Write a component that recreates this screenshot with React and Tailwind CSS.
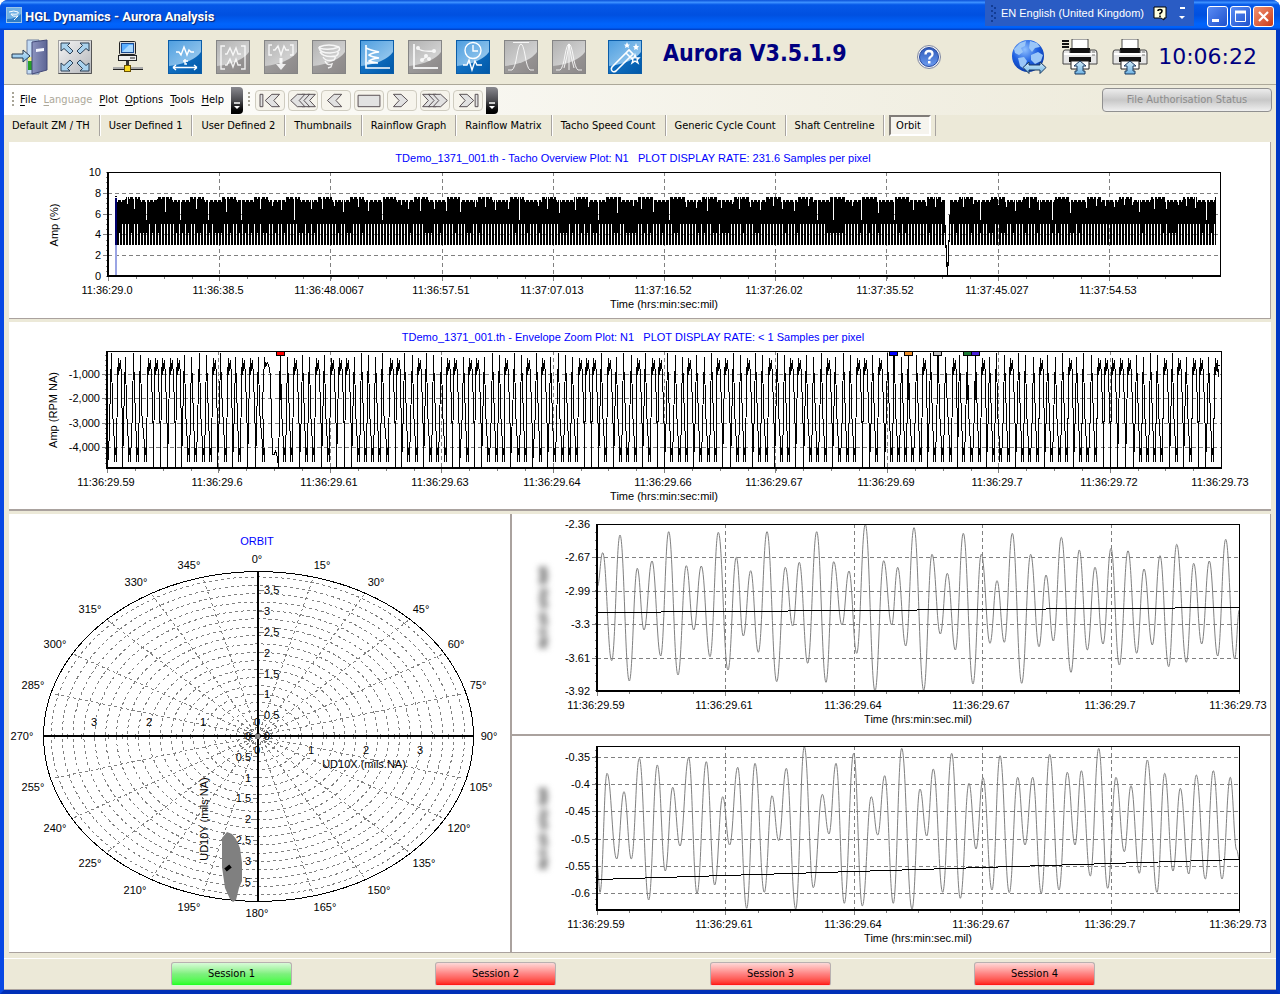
import React from "react";

const UI = "font-['DejaVu_Sans_Condensed','DejaVu_Sans',sans-serif]";

/* ---------- toolbar icons ---------- */

function SharedDefs() {
  return (
    <svg className="absolute h-0 w-0" aria-hidden="true">
      <defs>
        <linearGradient id="tileBlue" x1="0" y1="0" x2="1" y2="1">
          <stop offset="0" stopColor="#1f82d6" />
          <stop offset="1" stopColor="#0058a8" />
        </linearGradient>
        <linearGradient id="glossBlue" x1="0" y1="0" x2="1" y2="1">
          <stop offset="0" stopColor="#4f9fe0" />
          <stop offset="1" stopColor="#a5d0f0" />
        </linearGradient>
        <linearGradient id="tileGray" x1="0" y1="0" x2="1" y2="1">
          <stop offset="0" stopColor="#a9a9a9" />
          <stop offset="1" stopColor="#8b8787" />
        </linearGradient>
        <linearGradient id="glossGray" x1="0" y1="0" x2="1" y2="1">
          <stop offset="0" stopColor="#b2b2b2" />
          <stop offset="1" stopColor="#dedede" />
        </linearGradient>
        <linearGradient id="arrowBlue" x1="0" y1="0" x2="0" y2="1">
          <stop offset="0" stopColor="#d3ecfb" />
          <stop offset="1" stopColor="#6fb4e4" />
        </linearGradient>
        <linearGradient id="silver" x1="0" y1="0" x2="1" y2="1">
          <stop offset="0" stopColor="#f4f4f4" />
          <stop offset="1" stopColor="#b4b6ba" />
        </linearGradient>
        <linearGradient id="door" x1="0" y1="0" x2="1" y2="0">
          <stop offset="0" stopColor="#8c94c0" />
          <stop offset="1" stopColor="#5c6494" />
        </linearGradient>
        <radialGradient id="globe" cx="0.4" cy="0.3" r="0.8">
          <stop offset="0" stopColor="#8fc0ff" />
          <stop offset="0.5" stopColor="#1d5fe0" />
          <stop offset="1" stopColor="#06319c" />
        </radialGradient>
        <linearGradient id="orb" x1="0" y1="0" x2="0" y2="1">
          <stop offset="0" stopColor="#2d58b8" />
          <stop offset="1" stopColor="#6c9cf0" />
        </linearGradient>
      </defs>
    </svg>
  );
}

function Tile({ label, off, children }) {
  return (
    <button type="button" aria-label={label} className="size-[34px] shrink-0">
      <svg viewBox="0 0 34 34" className="block size-full" fill="none" stroke="#fff" strokeWidth="1.4">
        <rect x="0.5" y="0.5" width="33" height="33" fill={off ? "url(#tileGray)" : "url(#tileBlue)"} stroke={off ? "#858585" : "#0b5da8"} strokeWidth="1" />
        <path d="M1 1H33V12Q25 23 1 26Z" fill={off ? "url(#glossGray)" : "url(#glossBlue)"} stroke="none" />
        <g opacity={off ? 0.85 : 1}>{children}</g>
      </svg>
    </button>
  );
}

function ExitIcon() {
  return (
    <svg viewBox="0 0 38 36" className="block h-9 w-[38px]">
      <path d="M16 1H28V35H16Z" fill="#c4dcf4" stroke="#7080a0" />
      <path d="M17 22H22V31H17Z" fill="#28a028" />
      <path d="M17 18H22V22H17Z" fill="#f4f090" />
      <path d="M21 3L36 1V31L21 35Z" fill="url(#door)" stroke="#434a78" />
      <path d="M25 10L33 9V12L25 13Z" fill="#f4f6ff" />
      <path d="M1 15H12V11L19 17L12 23V19H1Z" fill="url(#arrowBlue)" stroke="#243850" />
    </svg>
  );
}

function ExpandIcon() {
  const arrow = "M3 3H12L9.500 5.500L15 11L12 14L6 8.500L3 11Z";
  return (
    <svg viewBox="0 0 34 34" className="block size-[34px]">
      <rect x="0.500" y="0.500" width="33" height="33" fill="url(#silver)" stroke="#a0a0a0" />
      <path d="M0.500 33.500H33.500V0.500" fill="none" stroke="#555" />
      {["", "matrix(-1 0 0 1 34 0)", "matrix(1 0 0 -1 0 34)", "matrix(-1 0 0 -1 34 34)"].map((t) => (
        <path key={t} d={arrow} transform={t || undefined} fill="#a9d2ee" stroke="#2c4056" />
      ))}
    </svg>
  );
}

function ComputerIcon() {
  return (
    <svg viewBox="0 0 30 32" className="block h-8 w-[30px]">
      <rect x="6.500" y="0.500" width="16" height="13" rx="1" fill="#d9d9d9" stroke="#222" />
      <rect x="8.500" y="2.500" width="12" height="9" fill="#5aaeff" stroke="#1a4a90" />
      <path d="M9 11L16 4H20V11Z" fill="#a8d8ff" />
      <rect x="5.500" y="14.500" width="18" height="5" fill="#eee" stroke="#222" />
      <path d="M17 17H22" stroke="#222" />
      <path d="M14.500 20V26" stroke="#333" strokeWidth="3" />
      <path d="M0 27H30" stroke="#aaa" strokeWidth="2" />
      <path d="M0 28.500H30" stroke="#222" />
      <rect x="11.500" y="24.500" width="6" height="6" fill="#f8d820" stroke="#6a5000" />
    </svg>
  );
}

function HelpIcon() {
  return (
    <svg viewBox="0 0 24 24" className="block size-6">
      <circle cx="12" cy="12" r="11.500" fill="#eef0f4" stroke="#8088a0" />
      <circle cx="12" cy="12" r="9.500" fill="url(#orb)" stroke="#2648a0" />
      <path d="M8.500 9.500Q8.500 6 12 6Q15.500 6 15.500 9Q15.500 11 13.500 12Q12.200 12.700 12.200 14.500" fill="none" stroke="#fff" strokeWidth="2.300" />
      <rect x="11" y="16" width="2.500" height="2.500" fill="#fff" />
    </svg>
  );
}

function GlobeIcon() {
  return (
    <svg viewBox="0 0 36 36" className="block size-9">
      <circle cx="17" cy="17" r="16" fill="url(#globe)" />
      <path d="M3 10L9 4L15 2L14 7L10 9L12 13L8 16L4 14Z M19 2L26 4L29 8L24 9L21 13L18 9Z M7 19L13 18L16 22L13 30L9 27Z M20 16L27 13L32 16L30 22L24 25L20 21Z" fill="#9ac6f8" />
      <path d="M12 28.500L18 23V26H29V23L35 28.500L29 34.500V31H18V34.500Z" fill="url(#arrowBlue)" stroke="#1b3a60" />
    </svg>
  );
}

function PrinterIcon({ list }) {
  return (
    <svg viewBox="0 0 36 36" className="block size-9">
      {list && <path d="M0 2H7M0 5H7M0 8H7" stroke="#111" strokeWidth="2" />}
      <path d="M10 0H26V14H10Z" fill="#fff" stroke="#222" strokeWidth="0.800" />
      <path d="M8 9H28V15H8Z" fill="#111" />
      <path d="M3 11H8V15H28V11H33Q35 11 35 14V25H1V14Q1 11 3 11Z" fill="#e6e6e6" stroke="#444" />
      <path d="M2 15H34" stroke="#fff" strokeWidth="2" />
      <path d="M30 13H33M30 16H33" stroke="#777" />
      <path d="M7 18H29V23H7Z" fill="#111" />
      <path d="M9 22H27V30H9Z" fill="#fff" stroke="#222" />
      <path d="M18 22L24 27H21V32H23V35H13V32H15V27H12Z" fill="url(#arrowBlue)" stroke="#1b3a60" />
    </svg>
  );
}

function TitleIcon() {
  return (
    <svg viewBox="0 0 16 16" className="block size-4">
      <rect x="0.500" y="0.500" width="15" height="15" fill="#2d7cc8" stroke="#9cc4e8" />
      <path d="M1 1H15V7Q10 12 1 12Z" fill="#6fb0e4" />
      <path d="M3 5Q8 3 12 5Q14 8 5 7Q6 10 12 9Q9 12 8 13" fill="none" stroke="#fff" />
    </svg>
  );
}

/* ---------- navigation strip ---------- */

const LEFT = (x) => `M${x} 10L${x + 7} 3.500H${x + 15}L${x + 9} 10L${x + 15} 16.500H${x + 7}Z`;
const RIGHT = (x) => `M${x} 3.500H${x + 8}L${x + 15} 10L${x + 8} 16.500H${x}L${x + 6} 10Z`;
const NAV = [
  ["First", ["M4.500 3.500H7.500V16.500H4.500Z", LEFT(10)]],
  ["Fast back", [LEFT(13), LEFT(7), LEFT(2)]],
  ["Back", [LEFT(6)]],
  ["Stop", ["M3.500 4.500H26.500V16.500H3.500Z"]],
  ["Forward", [RIGHT(6)]],
  ["Fast forward", [RIGHT(2), RIGHT(8), RIGHT(13)]],
  ["Last", [RIGHT(6), "M22.500 3.500H25.500V16.500H22.500Z"]],
];

function Grip() {
  return (
    <svg viewBox="0 0 3 16" className="block h-4 w-[3px] shrink-0" aria-hidden="true">
      <path d="M1 0V16" stroke="#a8a598" strokeWidth="2" strokeDasharray="2 2" />
    </svg>
  );
}

function Overflow({ label }) {
  return (
    <button type="button" aria-label={label} className="flex h-[27px] w-3 shrink-0 items-end justify-center rounded-r-sm bg-linear-to-b from-[#8a8a90] via-[#4c4c50] to-black pb-1">
      <svg viewBox="0 0 8 8" className="block size-2">
        <path d="M1 1H7" stroke="#fff" strokeWidth="1.500" />
        <path d="M1 4H7L4 7Z" fill="#fff" />
      </svg>
    </button>
  );
}

/* ---------- charts ---------- */

const LABEL = "font-['Liberation_Sans',Arial,sans-serif] text-[11px]";

function range(a, b, step) {
  const out = [];
  for (let v = a; v <= b + 0.001; v += step) out.push(v);
  return out;
}

function Frame({ x0, x1, y0, y1, rows, cols, minorX, minorY, labelX, xLabels, yLabels, title, titleX, titleY, axis, axisX, axisY, children }) {
  return (
    <>
      {title && <text x={titleX} y={titleY} textAnchor="middle" fill="#0000ff" className="whitespace-pre">{title}</text>}
      <g shapeRendering="crispEdges" stroke="#808080" strokeWidth="1" fill="none">
        <g strokeDasharray="4 3">
          {rows.map((y) => <path key={y} d={`M${x0} ${y + 0.5}H${x1}`} />)}
          {cols.map((x) => <path key={x} d={`M${x + 0.5} ${y0}V${y1}`} />)}
        </g>
        <path d={minorX.map((x) => `M${Math.round(x) + 0.5} ${y1}v3`).join("")} />
        <path d={minorY.map((y) => `M${x0 - 2} ${Math.round(y) + 0.5}h3`).join("")} />
        <path d={rows.map((y) => `M${x0 - 5} ${y + 0.5}h5`).join("") + [x0, ...cols].map((x) => `M${x + 0.5} ${y1}v5`).join("")} />
      </g>
      {children}
      <g shapeRendering="crispEdges" stroke="#000" fill="none">
        <path d={`M${x0} ${y0 + 0.5}H${x1 + 0.5}V${y1}`} />
        <path d={`M${x0} ${y0}V${y1}H${x1 + 1}`} strokeWidth="2" />
      </g>
      {xLabels.map(([x, t]) => <text key={x} x={x} y={labelX} textAnchor="middle">{t}</text>)}
      {yLabels.map(([y, t]) => <text key={t} x={x0 - 7} y={y + 4} textAnchor="end">{t}</text>)}
      <text x={axisX} y={axisY} textAnchor="middle">{axis}</text>
    </>
  );
}

function tachoPath() {
  let d = "";
  let seed = 11;
  let nextGap = 127;
  for (let x = 116; x < 1216; x++) {
    seed = (seed * 1103515 + 12345) % 65536;
    const r = seed / 65536;
    const bump = Math.sin((x - 116) / 5.1 - 1.6) > 0.15;
    let top = bump ? 197 : 200;
    if (x % 4 === 1) top += 2;
    if (x === nextGap) {
      top = r > 0.75 ? 220 : 204 + Math.round(r * 12);
      nextGap += 7 + Math.floor(r * 13);
    }
    if (x > 944 && x < 950) continue;
    const bottom = x % 3 === 2 ? (r > 0.7 ? 233 : 224) : 245;
    d += `M${x + 0.5} ${top}V${bottom}`;
  }
  return d + "M944.500 210V230M945.500 225V248M946.500 245V267M947.500 262V276M948.500 240V266M949.500 215V242";
}

const Z_LEFT = "111S 119D 125S 133S 140S 149D 156D 163D 171D 178D 184S 191S 199S 206S 214D 220S 229D 235S 243D 251D 258S 267W 280S 287S 295D 302S 309S 317D 324S 332D 340D 347D 354S 361S 368S 375S 382S 391D 398D 404S 412S 419D 426S";
const Z_MID = "SSDDSDDSSSDSSDSDSSSSDDDSDSSSDSDDSSSDSSSDDSSDSSDSSDDSSSDS";
const Z_MID_COUNT = 57;
const Z_RIGHT = "850S 858D 865D 872S 880D 887S 894S 901S 908S 916S 924D 930S 938S 945S 954D 959S 967S 975S 983D 989S 996S 1004S 1011D 1018S 1025S 1033S 1041D 1047S 1055S 1062S 1070D 1076S 1083S 1091S 1099D 1106D 1113D 1121D 1129D 1136S 1143S 1150S 1157S 1165D 1172S 1179D 1186S 1194D 1201D 1208S 1216D";

function zoomPath() {
  const parse = (s) => s.split(" ").map((t) => [parseInt(t, 10), t.slice(-1)]);
  const mid = Array.from({ length: Z_MID_COUNT }, (_, i) => [Math.round(433.3 + i * 7.31), Z_MID[i % Z_MID.length]]);
  const peaks = [...parse(Z_LEFT), ...mid, ...parse(Z_RIGHT)];
  let d = "M108.5 460.5";
  const to = (x, y) => {
    d += `L${x + 0.5} ${y + 0.5}`;
  };
  peaks.forEach(([x, k], i) => {
    if (k === "S") {
      to(x - 1, i % 2 ? 410 : 386);
      to(x, 353 + (i % 3) * 2);
      to(x + 1, i % 2 ? 388 : 410);
    } else if (k === "D") {
      [[-2, 376], [-1, 358], [-1, 374], [0, 363], [0, 370], [1, 360], [2, 376]].forEach(([o, y]) => to(x + o, y));
    } else {
      [[262, 404], [264, 357], [265, 366], [267, 362], [269, 368], [270, 376], [271, 420], [272, 454], [274, 454], [275, 450], [277, 457], [278, 467], [279, 410]].forEach(([px, y]) => to(px, y));
    }
    const next = peaks[i + 1];
    if (!next || k === "W") return;
    const m = Math.round((x + next[0]) / 2);
    if (k === "D") {
      to(m, 438);
      to(m, 467);
    } else {
      [[-1, 444], [-1, 461], [0, 448], [1, 455], [1, 448], [1, 461]].forEach(([o, y]) => to(m + o, y));
    }
  });
  return d + "L1217 362L1218 366L1220 365";
}

/* smooth wave through alternating extremes, stored at three times scale */
function wave(points, dx, dy) {
  const p = points.map(([x, y]) => [x / 3 + dx, y / 3 + dy]);
  let d = "";
  p.forEach(([x, y], i) => {
    if (i === 0) {
      d += `M${x.toFixed(1)} ${y.toFixed(1)}`;
      return;
    }
    const [px, py] = p[i - 1];
    const w = (x - px) * 0.42;
    d += `C${(px + w).toFixed(1)} ${py.toFixed(1)} ${(x - w).toFixed(1)} ${y.toFixed(1)} ${x.toFixed(1)} ${y.toFixed(1)}`;
  });
  return d;
}

const X_WAVE = [[262,230],[278,128],[305,452],[330,75],[358,513],[382,175],[402,360],[426,153],[452,438],[476,65],[504,495],[529,167],[551,360],[574,168],[600,440],[625,67],[654,480],[679,142],[700,378],[722,182],[745,427],[771,65],[800,515],[826,172],[848,348],[868,157],[893,460],[920,65],[948,517],[971,155],[996,345],[1017,183],[1040,430],[1066,43],[1095,543],[1121,152],[1145,345],[1163,172],[1187,408],[1212,53],[1241,541],[1266,133],[1291,372],[1312,190],[1336,420],[1360,70],[1389,522],[1414,133],[1440,400],[1461,212],[1483,397],[1507,70],[1535,520],[1562,133],[1587,410],[1608,195],[1630,393],[1654,82],[1683,487],[1708,120],[1732,420],[1755,172],[1779,402],[1803,115],[1828,465],[1854,122],[1880,430],[1902,177],[1927,405],[1950,137],[1976,470],[2000,103],[2029,457],[2051,160],[2075,402],[2098,153],[2123,438],[2147,88],[2174,447],[2188,300]];
const Y_WAVE = [[262,395],[270,472],[291,115],[320,372],[342,170],[364,372],[388,70],[416,495],[442,90],[466,408],[488,157],[510,333],[536,68],[561,475],[589,80],[614,450],[638,185],[659,330],[683,97],[710,520],[735,85],[763,472],[786,182],[806,317],[829,100],[857,522],[883,35],[910,458],[937,178],[957,297],[978,85],[1003,505],[1031,55],[1057,513],[1084,185],[1103,300],[1124,122],[1150,505],[1175,40],[1206,522],[1230,162],[1250,303],[1270,102],[1298,472],[1325,55],[1351,490],[1377,145],[1398,342],[1419,128],[1446,465],[1470,62],[1498,473],[1523,127],[1545,330],[1568,127],[1594,475],[1619,58],[1647,465],[1672,112],[1695,330],[1714,107],[1741,423],[1766,40],[1793,460],[1818,127],[1843,350],[1863,152],[1888,415],[1912,75],[1941,472],[1964,115],[1989,408],[2011,160],[2036,417],[2059,120],[2086,432],[2110,107],[2136,432],[2161,127],[2180,345],[2188,373]];

function TachoChart() {
  return (
    <svg viewBox="9 142 1261 176" className={`block h-auto w-full ${LABEL}`} role="img" aria-label="Tacho overview plot">
      <Frame
        x0={108} x1={1220} y0={172} y1={276} rows={[193, 214, 234, 255]} cols={[219, 330, 442, 553, 664, 775, 886, 998, 1109]}
        minorX={range(136, 1215, 27.8)} minorY={range(172, 276, 5.2)}
        labelX={294} xLabels={[[107, "11:36:29.0"], [218, "11:36:38.5"], [329, "11:36:48.0067"], [441, "11:36:57.51"], [552, "11:37:07.013"], [663, "11:37:16.52"], [774, "11:37:26.02"], [885, "11:37:35.52"], [997, "11:37:45.027"], [1108, "11:37:54.53"]]}
        yLabels={[[172, "10"], [193, "8"], [214, "6"], [234, "4"], [255, "2"], [276, "0"]]}
        title="TDemo_1371_001.th - Tacho Overview Plot: N1   PLOT DISPLAY RATE: 231.6 Samples per pixel" titleX={633} titleY={162}
        axis="Time (hrs:min:sec:mil)" axisX={664} axisY={308}
      >
        <path d={tachoPath()} stroke="#000" shapeRendering="crispEdges" fill="none" />
        <path d="M115 198H117V245H115Z" fill="#00006a" />
        <path d="M115 245H117V275H115Z" fill="#9aa4e4" />
        <path d="M115 196.500H117" stroke="#000" />
      </Frame>
      <text transform="translate(58 225) rotate(-90)" textAnchor="middle">Amp (%)</text>
    </svg>
  );
}

function EnvelopeChart() {
  const marks = [[280, "#ff0000"], [893, "#0000ff"], [908, "#f0902c"], [937, "#c0c0c0"], [967, "#1e7a34"], [975, "#4a22d8"]];
  return (
    <svg viewBox="9 322 1262 187" className={`block h-auto w-full ${LABEL}`} role="img" aria-label="Envelope zoom plot">
      <Frame
        x0={107} x1={1221} y0={351} y1={468} rows={[374, 398, 423, 447]} cols={[218, 330, 441, 553, 664, 775, 887, 998, 1110]}
        minorX={range(135, 1220, 27.85)} minorY={range(355, 466, 4.9)}
        labelX={486} xLabels={[[106, "11:36:29.59"], [217, "11:36:29.6"], [329, "11:36:29.61"], [440, "11:36:29.63"], [552, "11:36:29.64"], [663, "11:36:29.66"], [774, "11:36:29.67"], [886, "11:36:29.69"], [997, "11:36:29.7"], [1109, "11:36:29.72"], [1220, "11:36:29.73"]]}
        yLabels={[[374, "-1,000"], [398, "-2,000"], [423, "-3,000"], [447, "-4,000"]]}
        title="TDemo_1371_001.th - Envelope Zoom Plot: N1   PLOT DISPLAY RATE: < 1 Samples per pixel" titleX={633} titleY={341}
        axis="Time (hrs:min:sec:mil)" axisX={664} axisY={500}
      >
        <path d={zoomPath()} stroke="#000" strokeLinejoin="bevel" shapeRendering="crispEdges" fill="none" />
        {marks.map(([x, c]) => (
          <g key={x} shapeRendering="crispEdges" stroke="#000">
            <path d={`M${x + 0.5} 355V400`} />
            <rect x={x - 3.5} y="351.500" width="8" height="4" fill={c} />
          </g>
        ))}
      </Frame>
      <text transform="translate(57 410) rotate(-90)" textAnchor="middle">Amp (RPM NA)</text>
    </svg>
  );
}

const ANGLES = [[257, 563, 0], [322, 569, 15], [376, 586, 30], [421, 613, 45], [456, 648, 60], [478, 689, 75], [489, 740, 90], [481, 791, 105], [459, 832, 120], [424, 867, 135], [379, 894, 150], [325, 911, 165], [257, 917, 180], [189, 911, 195], [135, 894, 210], [90, 867, 225], [55, 832, 240], [33, 791, 255], [22, 740, 270], [33, 689, 285], [55, 648, 300], [90, 613, 315], [136, 586, 330], [189, 569, 345]];

function OrbitChart() {
  const cx = 258;
  const cy = 736;
  return (
    <svg viewBox="9 514 501 438" className={`block h-auto w-full ${LABEL}`} role="img" aria-label="Orbit plot">
      <text x="257" y="545" textAnchor="middle" fill="#0000ff">ORBIT</text>
      <g fill="none" stroke="#808080" strokeDasharray="3 3" shapeRendering="crispEdges">
        {range(1, 19, 1).map((k) => <ellipse key={k} cx={cx} cy={cy} rx={k * 10.88} ry={k * 8.37} />)}
        {range(15, 345, 15).filter((a) => a % 90).map((a) => {
          const t = (a * Math.PI) / 180;
          return <path key={a} d={`M${cx} ${cy}L${cx + 212 * Math.sin(t)} ${cy - 163 * Math.cos(t)}`} />;
        })}
      </g>
      <ellipse cx={cx + 0.5} cy={cy + 0.5} rx="215" ry="165" fill="none" stroke="#000" shapeRendering="crispEdges" />
      <g stroke="#808080" shapeRendering="crispEdges">
        <path d={range(-15, 15, 1).map((k) => `M${cx + k * 13.6} 734v5`).join("")} />
        <path d={range(-7, 7, 1).map((k) => `M${k < 0 ? 258 : 253} ${cy + k * 20.8}h6`).join("")} />
      </g>
      <path d="M44 736H473M258 571V902" stroke="#000" strokeWidth="2" shapeRendering="crispEdges" />
      {ANGLES.map(([x, y, a]) => <text key={a} x={x} y={y} textAnchor="middle">{a}°</text>)}
      {range(1, 7, 1).map((k) => <text key={k} x="264" y={740 - k * 20.8}>{k / 2}</text>)}
      {range(1, 6, 1).map((k) => <text key={k} x="251" y={740 + k * 20.8} textAnchor="end">{k / 2}</text>)}
      {[[94, 3], [149, 2], [203, 1]].map(([x, t]) => <text key={x} x={x} y="726" textAnchor="middle">{t}</text>)}
      {[[311, 1], [366, 2], [420, 3]].map(([x, t]) => <text key={x} x={x} y="754" textAnchor="middle">{t}</text>)}
      {[[257, 726], [248, 740], [267, 740], [257, 754]].map(([x, y]) => <text key={`${x}-${y}`} x={x} y={y} textAnchor="middle">0</text>)}
      <rect x="255" y="734" width="5" height="5" fill="#808080" />
      <text x="364" y="768" textAnchor="middle">UD10X (mils.NA)</text>
      <text transform="translate(208 819) rotate(-90)" textAnchor="middle">UD10Y (mils NA)</text>
      <path d="M227 832L232 834L236 839L240 848L242 863L242 881L239 888L236 900L233 902L230 899L225 888L222 867L222 838Z" fill="#808080" />
      <text x="251" y="886" textAnchor="end">.5</text>
      <path d="M225.500 870L230.500 866" stroke="#000" strokeWidth="4" />
    </svg>
  );
}

const SMUDGE = [0, 6, 12, 22, 29, 36, 46, 53, 62, 70, 76];

function AxisSmudge({ y }) {
  return (
    <g className="blur-[3px]" fill="#7a7a7a">
      {SMUDGE.map((o, i) => <rect key={o} x={539 + (i % 2)} y={y + o} width="8" height="5" />)}
    </g>
  );
}

const TIMES = [[596, "11:36:29.59"], [724, "11:36:29.61"], [853, "11:36:29.64"], [981, "11:36:29.67"], [1110, "11:36:29.7"], [1238, "11:36:29.73"]];

function XChart() {
  return (
    <svg viewBox="512 514 758 220" className={`block h-auto w-full ${LABEL}`} role="img" aria-label="UD10X time history">
      <AxisSmudge y={567} />
      <Frame
        x0={597} x1={1239} y0={524} y1={691} rows={[557, 591, 624, 658]} cols={[725, 854, 982, 1111]}
        minorX={range(597, 1240, 32.1)} minorY={range(532, 690, 8.3)}
        labelX={709} xLabels={TIMES}
        yLabels={[[524, "-2.36"], [557, "-2.67"], [591, "-2.99"], [624, "-3.3"], [658, "-3.61"], [691, "-3.92"]]}
        axis="Time (hrs:min:sec.mil)" axisX={918} axisY={723}
      >
        <path d={wave(X_WAVE, 510, 510)} stroke="#808080" fill="none" />
        <path d="M597 612.500L1239 607.500" stroke="#000" shapeRendering="crispEdges" />
      </Frame>
    </svg>
  );
}

function YChart() {
  return (
    <svg viewBox="512 736 758 216" className={`block h-auto w-full ${LABEL}`} role="img" aria-label="UD10Y time history">
      <AxisSmudge y={788} />
      <Frame
        x0={597} x1={1239} y0={746} y1={910} rows={[757, 784, 811, 839, 866, 893]} cols={[725, 854, 982, 1111]}
        minorX={range(597, 1240, 32.1)} minorY={range(750, 908, 5.5)}
        labelX={928} xLabels={TIMES}
        yLabels={[[757, "-0.35"], [784, "-0.4"], [811, "-0.45"], [839, "-0.5"], [866, "-0.55"], [893, "-0.6"]]}
        axis="Time (hrs:min:sec.mil)" axisX={918} axisY={942}
      >
        <path d={wave(Y_WAVE, 510, 735)} stroke="#808080" fill="none" />
        <path d="M597 879.500L1239 859.500" stroke="#000" shapeRendering="crispEdges" />
      </Frame>
    </svg>
  );
}

/* ---------- page ---------- */

const MENUS = ["File", "Language", "Plot", "Options", "Tools", "Help"];
const TABS = ["Default ZM / TH", "User Defined 1", "User Defined 2", "Thumbnails", "Rainflow Graph", "Rainflow Matrix", "Tacho Speed Count", "Generic Cycle Count", "Shaft Centreline"];
const RED = "bg-linear-to-b from-[#fbd8d8] via-[#ff8080] to-[#ff0c0c]";
const GREEN = "bg-linear-to-b from-[#d8fad8] via-[#7cf07c] to-[#1cff1c]";
const SESSIONS = [
  ["Session 1", `ml-[167px] ${GREEN}`],
  ["Session 2", `ml-[143px] ${RED}`],
  ["Session 3", `ml-[154px] ${RED}`],
  ["Session 4", `ml-[143px] ${RED}`],
];
const WIN = "flex size-[21px] items-center justify-center rounded-[3px] border border-white";

export default function App() {
  return (
    <div className={`flex min-h-screen flex-col overflow-hidden rounded-t-lg bg-[#0a46d8] text-[11px] leading-[14px] text-black ${UI}`}>
      <SharedDefs />
      <header className="flex h-[30px] items-center bg-[linear-gradient(180deg,#0a50d8_0%,#3c90ff_8%,#0558e8_16%,#0050e0_50%,#0064fc_80%,#0060f8_92%,#003cc0_100%)] pr-[6px] pl-[6px]">
        <TitleIcon />
        <h1 className="ml-[3px] pt-1 font-[Roboto,sans-serif] text-[13px] font-bold text-white [text-shadow:1px_1px_1px_#0a1f6a]">HGL Dynamics - Aurora Analysis</h1>
        <div className="mr-[13px] ml-auto flex h-[26px] items-center self-start bg-[#2a5cc4] pr-2 pl-[6px] text-white">
          <svg viewBox="0 0 6 18" className="mr-1 block h-[18px] w-[6px]" aria-hidden="true">
            <path d="M1 1V18M4 3V18" stroke="#123c94" strokeWidth="2" strokeDasharray="2 3" />
          </svg>
          <span className="font-['Liberation_Sans',Arial,sans-serif] whitespace-nowrap">EN English (United Kingdom)</span>
          <svg viewBox="0 0 14 15" className="ml-[9px] block h-[15px] w-[14px]">
            <path d="M1 1H13V12H11V14L8 12H1Z" fill="#ffffe0" stroke="#000" />
            <path d="M5 5Q5 3.500 7 3.500Q9 3.500 9 5Q9 6.500 7 7.500V8.500M7 9.500V11" fill="none" stroke="#000" strokeWidth="1.600" />
          </svg>
          <svg viewBox="0 0 8 14" className="ml-[11px] block h-[14px] w-2">
            <path d="M2 2H7" stroke="#fff" strokeWidth="2" />
            <path d="M1 10H7L4 13Z" fill="#fff" />
          </svg>
        </div>
        <div className="flex gap-[2px] pt-[2px]">
          <button type="button" aria-label="Minimise" className={`${WIN} bg-linear-to-br from-[#5a8cf4] to-[#1f50cc]`}>
            <svg viewBox="0 0 19 19" className="block size-[19px]"><path d="M4 13.500H11" stroke="#fff" strokeWidth="3" /></svg>
          </button>
          <button type="button" aria-label="Maximise" className={`${WIN} bg-linear-to-br from-[#5a8cf4] to-[#1f50cc]`}>
            <svg viewBox="0 0 19 19" className="block size-[19px]"><path d="M4.500 5H14.500V14.500H4.500Z" fill="none" stroke="#fff" /><path d="M4 5H15" stroke="#fff" strokeWidth="3" /></svg>
          </button>
          <button type="button" aria-label="Close" className={`${WIN} bg-linear-to-br from-[#f09070] to-[#cc3810]`}>
            <svg viewBox="0 0 19 19" className="block size-[19px]"><path d="M5 5L14 14M14 5L5 14" stroke="#fff" strokeWidth="2.200" /></svg>
          </button>
        </div>
      </header>

      <div className="flex flex-1 flex-col border-x-4 border-b-4 border-r-[#0038c4] border-b-[#0030b8] border-l-[#0848e4] bg-[#ece9d8]">
        <div className="flex h-[55px] items-center border-b border-[#aca899] pr-[19px] pl-[7px]">
          <button type="button" aria-label="Exit"><ExitIcon /></button>
          <button type="button" aria-label="Full screen" className="ml-[9px]"><ExpandIcon /></button>
          <button type="button" aria-label="Network" className="ml-[21px]"><ComputerIcon /></button>
          <div className="ml-[25px] flex gap-[14px]">
            <Tile label="Time history"><path d="M8 12H11L13 15L16 7L19 15L21 10L23 12H26M5 27.500H29M5 27.500L8 25M5 27.500L8 30M29 27.500L26 25M29 27.500L26 30" /><path d="M17 19V24H19M15 21H20" /></Tile>
            <Tile off label="Zoom bracket"><path d="M9 6H5V29H9M25 6H29V29H25M9 14H11L14 8L17 15L20 8L22 14H25M9 25H11L14 19L17 27L20 19L22 25H25" /></Tile>
            <Tile off label="Export bracket"><path d="M8 5H5V15H8M26 5H29V15H26M9 10H11L14 6L17 15L20 6L22 10H25" /><path d="M17 18V26" strokeWidth="3" /><path d="M12 24H22L17 30Z" fill="#fff" stroke="none" /></Tile>
            <Tile off label="Waterfall"><path d="M7 7Q17 3 27 7Q30 12 18 13Q8 13 7 8Q17 11 27 7M8 12Q12 18 24 16Q27 14 26 12M11 17Q14 22 22 20Q24 18 23 16M13 21Q15 26 20 24L19 27L16 28" /></Tile>
            <Tile label="Spectrum"><path d="M6 5V28H30M6 8Q10 10 19 12Q11 13 9 15Q12 17 19 18Q11 19 9 21Q12 22 18 23H7" strokeWidth="1.600" /></Tile>
            <Tile off label="Scatter"><path d="M6 4V28H30" strokeWidth="1.800" /><path d="M10 8Q12 12 26 11M14 20L18 17" /><g fill="#fff" stroke="none"><circle cx="10" cy="8" r="2" /><circle cx="26" cy="11" r="2" /><circle cx="14" cy="20" r="2" /><circle cx="18" cy="16" r="2" /><circle cx="21" cy="19" r="2" /></g></Tile>
            <Tile label="Clock trigger"><circle cx="17" cy="10.500" r="8" /><path d="M17 5V11H22M7 25H11L13 20L16 30L19 21L21 25H26" /></Tile>
            <Tile off label="Flat top window"><path d="M9 2.500H25M4 30H8Q11 28 13 15Q15 4 17 4Q19 4 21 15Q23 28 26 30H30" strokeWidth="1" /></Tile>
            <Tile off label="Window overlay"><path d="M4 30H8Q11 28 13 15Q15 4 17 4Q19 4 21 15Q23 28 26 30H30M17 4V30M12 28Q15 18 17 4Q19 18 22 28" strokeWidth="1" /></Tile>
          </div>
          <div className="ml-[22px] flex">
            <Tile label="Wizard"><path d="M4 27L21 10L25 14L8 31Q5 33 3.500 30Q3 28.500 4 27ZM18 13L22 17" strokeWidth="1.600" /><path d="M19 2L20 4.500H22L20.500 6L21 8L19 7L17 8L17.500 6L16 4.500H18ZM28 3L29 6H31L29.500 8L30 10L28 9L26 10L26.500 8L25 6H27Z" fill="#fff" stroke="none" /><path d="M27 15L28 18H31L29 20L30 23L27 21L24 23L25 20L23 18H26Z" /></Tile>
          </div>
          <div className="ml-[21px] pb-2 text-[23px] leading-7 font-bold whitespace-nowrap text-[#000080]">Aurora V3.5.1.9</div>
          <button type="button" aria-label="Help" className="ml-[70px]"><HelpIcon /></button>
          <div className="ml-auto flex items-center">
            <button type="button" aria-label="Web"><GlobeIcon /></button>
            <button type="button" aria-label="Print list" className="ml-[15px]"><PrinterIcon list /></button>
            <button type="button" aria-label="Print" className="ml-[14px]"><PrinterIcon /></button>
            <time className="ml-[10px] font-['DejaVu_Sans',sans-serif] text-[22px] leading-7 text-[#000080]">10:06:22</time>
          </div>
        </div>

        <div className="flex h-[30px] items-center bg-linear-to-r from-white to-[#ece9d8] pr-1 pl-2">
          <Grip />
          <nav className="ml-[5px] flex gap-[7px]">
            {MENUS.map((m) => (
              <button key={m} type="button" disabled={m === "Language"} className="disabled:text-[#aca899]">
                <u className="underline-offset-2">{m[0]}</u>{m.slice(1)}
              </button>
            ))}
          </nav>
          <div className="ml-[7px]"><Overflow label="More menus" /></div>
          <div className="ml-[5px] flex items-center">
            <Grip />
            <div className="ml-[4px] flex gap-[3px]">
              {NAV.map(([label, shapes]) => (
                <button key={label} type="button" aria-label={label} className="h-[21px] w-[30px] rounded-sm border border-[#cfccc0] bg-[#f6f4ec]">
                  <svg viewBox="1 0 28 20" className="block h-[19px] w-7" fill="#e2e2e2" stroke="#524a4e">
                    {shapes.map((d) => <path key={d} d={d} />)}
                  </svg>
                </button>
              ))}
            </div>
            <div className="ml-[3px]"><Overflow label="More controls" /></div>
          </div>
          <button type="button" disabled className="ml-auto h-[24px] w-[170px] rounded-[4px] border border-[#909090] bg-linear-to-b from-[#ececec] via-[#c8c8c8] to-[#efefef] text-[#8c8c8c]">File Authorisation Status</button>
        </div>

        <div className="flex h-[22px]">
          {TABS.map((t) => (
            <button key={t} type="button" className="h-[21px] border-r border-[#a8a4a0] pr-[9px] pl-[8px] whitespace-nowrap shadow-[1px_0_0_#fff] nth-[n+2]:pl-[9px]">{t}</button>
          ))}
          <div className="h-[21px] border-r border-[#a8a4a0] pr-[4px] pl-[5px]">
            <button type="button" aria-pressed="true" className="h-[21px] w-[42px] border-2 border-t-[#807c78] border-r-white border-b-white border-l-[#807c78] bg-[#f6f4ee] pr-1">Orbit</button>
          </div>
        </div>

        <main className="flex flex-col gap-[3px] pt-[5px] pr-[5px] pl-[5px]">
          <section className="border-r border-b border-[#aaa29e] bg-white"><TachoChart /></section>
          <section className="border-b-2 border-[#aaa29e] bg-white"><EnvelopeChart /></section>
          <div className="grid grid-cols-[503fr_759fr]">
            <section className="border-r-2 border-b border-[#aaa29e] bg-white"><OrbitChart /></section>
            <div className="flex flex-col">
              <section className="border-r border-b-2 border-[#aaa29e] bg-white"><XChart /></section>
              <section className="border-r border-b border-[#aaa29e] bg-white"><YChart /></section>
            </div>
          </div>
        </main>

        <footer className="mt-[5px] flex flex-1 items-center border-t border-b border-t-white border-b-[#aaa29e]">
          {SESSIONS.map(([label, look]) => (
            <button key={label} type="button" className={`h-6 w-[121px] rounded-[3px] border border-[#b8b0b0] border-b-transparent ${look}`}>{label}</button>
          ))}
        </footer>
      </div>
    </div>
  );
}
